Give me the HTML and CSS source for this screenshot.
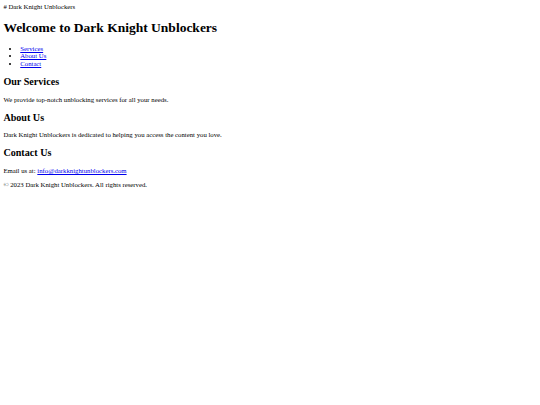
FILE: index.html
```html
<!DOCTYPE html>
<html>
<head>
<meta charset="utf-8">
<title>Dark Knight Unblockers</title>
<link rel="stylesheet" href="styles.css">
</head>
<body>
# Dark Knight Unblockers
<h1>Welcome to Dark Knight Unblockers</h1>
<ul>
<li><a href="#services">Services</a></li>
<li><a href="#about">About Us</a></li>
<li><a href="#contact">Contact</a></li>
</ul>
<h2 id="services">Our Services</h2>
<p>We provide top-notch unblocking services for all your needs.</p>
<h2 id="about">About Us</h2>
<p>Dark Knight Unblockers is dedicated to helping you access the content you love.</p>
<h2 id="contact">Contact Us</h2>
<p>Email us at: <a href="mailto:info@darkknightunblockers.com">info@darkknightunblockers.com</a></p>
<p>&copy; 2023 Dark Knight Unblockers. All rights reserved.</p>
</body>
</html>
```
FILE: styles.css
```css
html {
  background: #fff;
}
body {
  margin: 3.375px;
  font-family: "Liberation Serif", "Times New Roman", serif;
  font-size: 6.75px;
  line-height: 7.594px;
  color: #000;
}
h1 {
  font-size: 2em;
  line-height: 15.61px;
  margin: 0.67em 0;
}
h2 {
  font-size: 1.5em;
  line-height: 11.39px;
  margin: 0.83em 0;
}
ul {
  margin: 1em 0;
  padding-left: 16.875px;
}
p {
  margin: 1em 0;
}
a {
  color: #0000ee;
}
```
